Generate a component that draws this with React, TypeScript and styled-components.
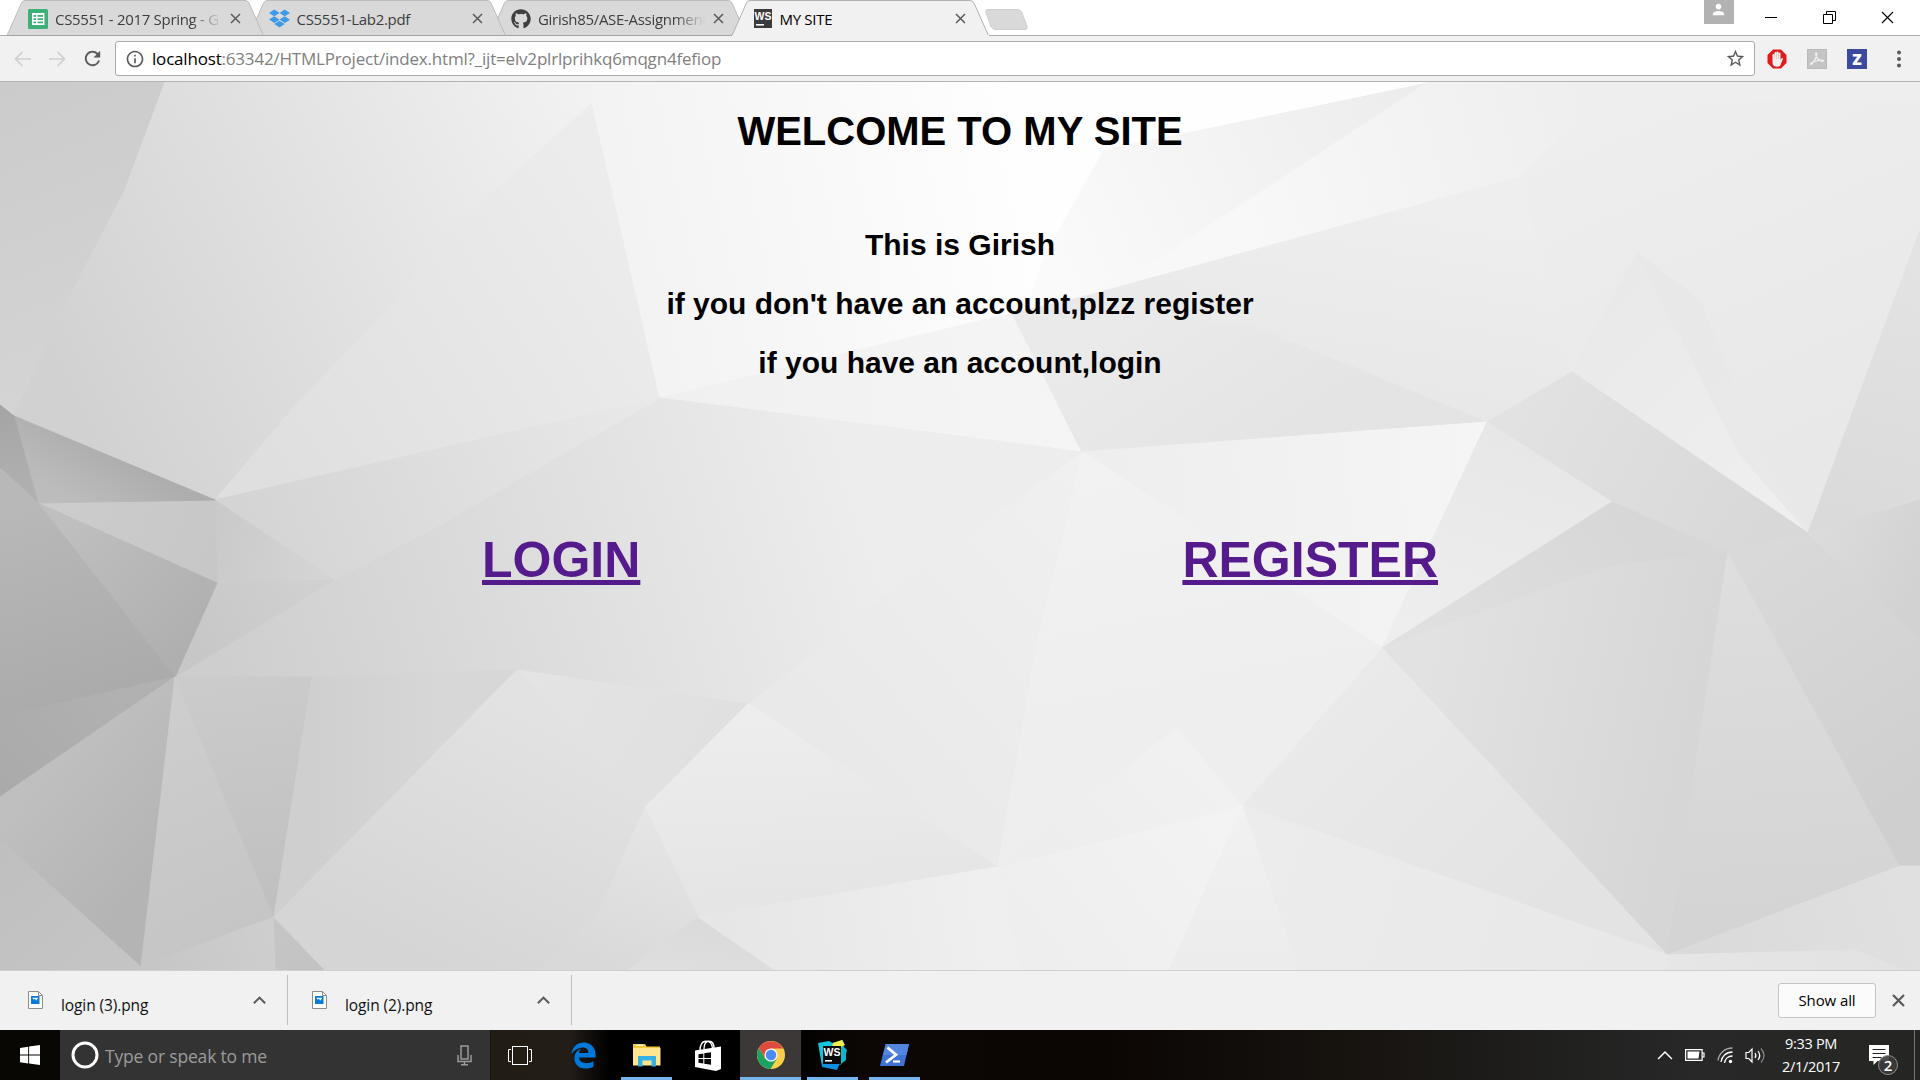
import React from "react";
import styled, { createGlobalStyle } from "styled-components";
import { FaDropbox, FaGithub, FaEdgeLegacy } from "react-icons/fa";
import { MdRefresh, MdInfoOutline, MdStarBorder, MdPerson } from "react-icons/md";

const GlobalStyle = createGlobalStyle`
  html, body { margin: 0; padding: 0; }
  body { width: 1920px; height: 1080px; overflow: hidden; }
  * { box-sizing: border-box; }
  svg { display: block; flex: none; }
`;

const uiFont = `"Open Sans", "Noto Sans", sans-serif`;

const Screen = styled.div`
  display: flex;
  flex-direction: column;
  width: 1920px;
  height: 1080px;
  background: #fff;
  font-family: ${uiFont};
`;

/* ---------- tab strip ---------- */

const TabStrip = styled.div`
  display: flex;
  height: 36px;
  padding: 0 3px 0 7px;
  background: #fff;
  box-shadow: inset 0 -1px 0 #b0b0b0;
`;

const TabBox = styled.div<{ $layer: number }>`
  position: relative;
  z-index: ${(p) => p.$layer};
  display: flex;
  align-items: center;
  width: 257px;
  height: 36px;
  margin-right: -15.5px;
  padding: 1px 22px 0 21px;
`;

const TabShape = styled.svg`
  position: absolute;
  left: 0;
  top: 0;
`;

const Favicon = styled.div`
  position: relative;
  display: flex;
  width: 20px;
  justify-content: center;
  margin-right: 7px;
`;

const TabTitle = styled.div<{ $fade?: boolean; $active?: boolean }>`
  position: relative;
  width: 167px;
  overflow: hidden;
  white-space: nowrap;
  font-size: 15px;
  line-height: 22px;
  letter-spacing: -0.3px;
  color: ${(p) => (p.$active ? "#000" : "#3e3e3e")};
  ${(p) => p.$fade && "mask-image: linear-gradient(90deg, #000 136px, transparent 167px);"}
`;

const TabClose = styled.div`
  position: relative;
  margin-left: 8px;
`;

const NewTab = styled.div`
  width: 37px;
  height: 21px;
  margin: 9px 0 0 15px;
  border: 1px solid #cfcfcf;
  border-radius: 4px;
  background: #d9d9d9;
  transform: skewX(20deg);
`;

const WindowControls = styled.div`
  display: flex;
  margin-left: auto;
`;

const ProfileButton = styled.div`
  display: flex;
  justify-content: center;
  width: 30px;
  height: 24px;
  padding-top: 1px;
  margin-right: 8px;
  background: #b2b2b2;
  color: #fff;
`;

const WindowButton = styled.div`
  display: flex;
  align-items: center;
  justify-content: center;
  width: 58.5px;
  height: 34px;
`;

/* ---------- toolbar ---------- */

const Toolbar = styled.div`
  display: flex;
  align-items: center;
  height: 46px;
  padding: 0 5px;
  background: #f1f1f1;
  border-bottom: 1px solid #b3b5b3;
`;

const NavButton = styled.div<{ $off?: boolean }>`
  display: flex;
  justify-content: center;
  width: 35px;
  color: ${(p) => (p.$off ? "#cfcfcf" : "#5a5a5a")};
`;

const Omnibox = styled.div`
  display: flex;
  flex: none;
  align-items: center;
  width: 1640px;
  height: 35px;
  margin-left: 5px;
  padding: 0 8px 0 9px;
  border: 1px solid #a9a9a9;
  border-radius: 3px;
  background: #fff;
  color: #5a5a5a;
`;

const Address = styled.div`
  flex: 1;
  padding-left: 7px;
  font-size: 17px;
  line-height: 26px;
  letter-spacing: -0.19px;
  white-space: nowrap;
  color: #808080;
  b { font-weight: 400; color: #000; }
`;

const Extensions = styled.div`
  display: flex;
  align-items: center;
  gap: 20px;
  margin-left: 12px;
`;

/* ---------- page ---------- */

const Page = styled.main`
  position: relative;
  flex: 1;
  min-height: 0;
  overflow: hidden;
  font-family: "Liberation Sans", Arial, sans-serif;
  font-weight: 700;
  color: #000;
`;

const Backdrop = styled.svg`
  position: absolute;
  inset: 0;
`;

const PageBody = styled.div`
  position: relative;
  display: flex;
  flex-direction: column;
  align-items: center;
`;

const Title = styled.h1`
  margin: 26px 0 74px;
  font-size: 40px;
  line-height: 46px;
`;

const Line = styled.p`
  margin: 0 0 25px;
  font-size: 30px;
  line-height: 34px;
`;

const Links = styled.nav`
  display: flex;
  justify-content: space-between;
  width: 956px;
  margin-top: 127px;
`;

const PageLink = styled.a`
  font-size: 50px;
  line-height: 57px;
  color: #551a8b;
  text-decoration: underline;
  text-decoration-thickness: 5px;
  text-underline-offset: 3px;
  text-decoration-skip-ink: none;
`;

/* ---------- downloads ---------- */

const Downloads = styled.div`
  display: flex;
  align-items: center;
  height: 60px;
  padding-bottom: 1px;
  border-top: 1px solid #d0d0d0;
  background: #f1f1f1;
`;

const DownloadItem = styled.div`
  display: flex;
  align-items: center;
  width: 284px;
  height: 50px;
  padding: 0 21px 0 24px;
  border-right: 1px solid #bfbfbf;
  &:first-child { width: 288px; padding-left: 28px; }
`;

const FileName = styled.div`
  flex: 1;
  padding: 9px 0 0 18px;
  font-size: 15.5px;
  letter-spacing: -0.1px;
  line-height: 22px;
  color: #111;
`;

const ShowAll = styled.button`
  width: 98px;
  height: 35px;
  margin: 0 16px 0 auto;
  border: 1px solid #c4c4c4;
  border-radius: 3px;
  background: #fbfbfb;
  font: 15px ${uiFont};
  letter-spacing: -0.1px;
  color: #000;
  padding: 0;
`;

const BarClose = styled.div`
  margin-right: 15px;
`;

/* ---------- taskbar ---------- */

const Taskbar = styled.div`
  display: flex;
  height: 50px;
  background: linear-gradient(90deg, #080704 0, #080704 490px, #221c14 491px, #221d17 570px, #000 610px, #000 780px, #0c0704 860px, #0b0603 1100px, #17130f 1350px, #20201f 1560px, #282828 1700px, #252523 1920px);
`;

const StartButton = styled.div`
  display: flex;
  align-items: center;
  justify-content: center;
  width: 60px;
`;

const SearchBox = styled.div`
  display: flex;
  align-items: center;
  width: 430px;
  padding: 0 18px 0 11px;
  background: #333;
`;

const SearchText = styled.div`
  flex: 1;
  padding: 1px 0 0 6px;
  font-size: 17.5px;
  letter-spacing: -0.18px;
  color: #9b9b9b;
`;

const TaskButton = styled.div<{ $width: number; $bar?: number; $active?: boolean }>`
  display: flex;
  align-items: center;
  justify-content: center;
  width: ${(p) => p.$width}px;
  background:
    ${(p) => (p.$bar ? `linear-gradient(#76b4ee, #76b4ee) center bottom / ${p.$bar}px 3px no-repeat` : "none")}
    ${(p) => (p.$active ? ", #3b3837" : "")};
`;

const Tray = styled.div`
  display: flex;
  align-items: center;
  margin-left: auto;
`;

const Clock = styled.div`
  width: 80px;
  margin: 0 18px 0 1px;
  text-align: center;
  color: #fff;
  font-size: 14.5px;
  line-height: 23px;
  letter-spacing: -0.3px;
`;

const Notice = styled.div`
  position: relative;
  width: 32px;
  height: 50px;
`;

const NoticeIcon = styled.svg`
  position: absolute;
  left: 0;
  top: 15px;
`;

const Badge = styled.div`
  position: absolute;
  left: 9px;
  top: 25px;
  width: 20px;
  height: 20px;
  border: 1px solid #8d8d8d;
  border-radius: 50%;
  background: #3a3a3ae8;
  color: #fff;
  font-size: 15px;
  font-weight: 600;
  line-height: 18px;
  text-align: center;
`;

const DesktopEdge = styled.div`
  width: 1px;
  height: 50px;
  margin: 0 5px 0 13px;
  background: #777;
`;

/* ---------- drawings ---------- */

const Cross = ({ size, width, color }: { size: number; width: number; color: string }) => (
  <svg width={size} height={size} viewBox={`0 0 ${size} ${size}`}>
    <path d={`M1 1L${size - 1} ${size - 1}M${size - 1} 1L1 ${size - 1}`} stroke={color} strokeWidth={width} />
  </svg>
);

const SheetIcon = () => (
  <svg width="20" height="20" viewBox="0 0 20 20">
    <rect width="20" height="20" rx="1.5" fill="#3bb077" />
    <path d="M4 4h12.500v12H4z" fill="#fff" />
    <path d="M5.500 6H8v1.800H5.500zM9.500 6H15v1.800H9.500zM5.500 9.200H8V11H5.500zM9.500 9.200H15V11H9.500zM5.500 12.400H8v1.800H5.500zM9.500 12.400H15v1.800H9.500z" fill="#3bb077" />
  </svg>
);

const WsIcon = () => (
  <svg width="18" height="19" viewBox="0 0 18 19">
    <rect width="18" height="19" fill="#3b3b3b" />
    <text x="9" y="10.500" textAnchor="middle" fontFamily="Liberation Sans, sans-serif" fontWeight="700" fontSize="10.500" fill="#fff">WS</text>
    <path d="M2 15h8v1.600H2z" fill="#fff" />
  </svg>
);

const Arrow = ({ flip }: { flip?: boolean }) => (
  <svg width="17" height="16" viewBox="0 0 17 16">
    <path
      d={flip ? "M0 8h15.500M8.500 1l7 7-7 7" : "M17 8H1.500M8.500 1l-7 7 7 7"}
      fill="none"
      stroke="currentColor"
      strokeWidth="1.700"
    />
  </svg>
);

const BlockIcon = () => (
  <svg width="20" height="20" viewBox="0 0 20 20">
    <path d="M6 .5h8L19.500 6v8L14 19.500H6L.5 14V6z" fill="#e01b1b" />
    <path
      d="M5.500 10.500V6a1 1 0 0 1 2 0V4a1 1 0 0 1 2 0v-.6a1 1 0 0 1 2 0V4.400a1 1 0 0 1 2 0V11l1-1.600c.8-.9 1.800-.3 1.400.6l-2.500 6.200c-.6 1.200-1.400 1.500-3.100 1.500-3.200 0-4.800-1.200-4.800-4.200z"
      fill="#f4efef"
    />
    <path d="M7.500 5v5M9.500 4v6M11.500 4.500V10" stroke="#d9b4b4" strokeWidth=".6" />
  </svg>
);

const PdfIcon = () => (
  <svg width="20" height="20" viewBox="0 0 20 20">
    <rect x=".5" y=".5" width="19" height="19" fill="#c4c4c4" stroke="#b9b9b9" />
    <path
      d="M4 15.500c1.500-.4 5-5.500 5.800-10.500.1-1.400-1.500-1.300-1.200.2.500 3 3.200 6.200 6.500 7.100 1.700.3 1.800-1.200.2-1.300-3.500-.1-7.500.9-10.600 2.800-1.300.9-1.500 1.700-.7 1.700z"
      fill="none"
      stroke="#f3f3f3"
      strokeWidth="1.200"
    />
  </svg>
);

const ZIcon = () => (
  <svg width="20" height="20" viewBox="0 0 20 20">
    <rect width="20" height="20" fill="#3b4a9c" />
    <text x="10" y="15.500" textAnchor="middle" fontFamily="Open Sans, sans-serif" fontWeight="800" fontSize="15.500" fill="#fff">Z</text>
  </svg>
);

const MenuDots = () => (
  <svg width="24" height="18" viewBox="-10 0 24 18">
    <circle cx="2" cy="2.500" r="2" fill="#5a5a5a" />
    <circle cx="2" cy="9" r="2" fill="#5a5a5a" />
    <circle cx="2" cy="15.500" r="2" fill="#5a5a5a" />
  </svg>
);

const FileIcon = () => (
  <svg width="15" height="18" viewBox="0 0 15 18">
    <path d="M.5.5h10l4 4v13H.5z" fill="#fff" stroke="#8c8c8c" />
    <path d="M10.500.5v4h4" fill="none" stroke="#8c8c8c" />
    <path d="M3 5h8.500v8H3z" fill="#0a78d7" />
    <path d="M4.300 6.800l1.500 2 1-1.200 1.400 2.200 2-3z" fill="#fff" />
  </svg>
);

const Chevron = ({ size, width, color }: { size: number; width: number; color: string }) => (
  <svg width={size} height={size * 0.62} viewBox="0 0 16 10">
    <path d="M1 9l7-7 7 7" fill="none" stroke={color} strokeWidth={width} />
  </svg>
);

const WindowsLogo = () => (
  <svg width="20" height="20" viewBox="0 0 20 20" fill="#fff">
    <path d="M0 2.900L8.200 1.700V9.600H0zM9.100 1.600L20 0V9.600H9.100zM0 10.500h8.200v7.900L0 17.200zM9.100 10.500H20V20L9.100 18.500z" />
  </svg>
);

const MicIcon = () => (
  <svg width="15" height="21" viewBox="0 0 15 21" fill="none" stroke="#9b9b9b" strokeWidth="1.500">
    <rect x="4" y="1" width="7" height="13" />
    <path d="M1 10v6.500h13V10M7.500 16.500V19M4 19.700h7" />
  </svg>
);

const TaskViewIcon = () => (
  <svg width="24" height="19" viewBox="0 0 24 19" fill="none" stroke="#fff">
    <rect x="4.500" y=".5" width="15" height="18" />
    <path d="M3 3.500H.5v12H3M21 3.500h2.500v12H21" />
  </svg>
);

const FolderIcon = () => (
  <svg width="28" height="24" viewBox="0 0 28 24">
    <path d="M0 1h12l1.500 2.500H27V22H0z" fill="#f4c63d" />
    <path d="M3 1.500h7V3H3z" fill="#fff6d5" />
    <path d="M0 5h27.500v17.500H0z" fill="#fde592" />
    <path d="M5 23.500V13h18v10.500h-4.500V17.500h-9v6z" fill="#37b1e4" />
  </svg>
);

const StoreIcon = () => (
  <svg width="26" height="31" viewBox="0 0 26 31">
    <path d="M5 11C5 5 6.500 1.500 10.500 1.200S17 4 17.500 8M9 9C9 4 11 1 14 1.200S19 4 19 8" fill="none" stroke="#fff" strokeWidth="1.400" />
    <path d="M0 10.500L26 6.500V29L21 31 0 27z" fill="#fff" />
    <path d="M3.500 14.200L8.300 13.500V18H3.500zM9.300 13.300L16 12.300V18H9.300zM3.500 19H8.300V23.500L3.500 22.800zM9.300 19H16V24.700L9.300 23.700z" fill="#000" />
  </svg>
);

const ChromeIcon = () => (
  <svg width="28" height="28" viewBox="0 0 28 28">
    <circle cx="14" cy="14" r="14" fill="#fcd049" />
    <path d="M14 14L8 17.500 1.900 7A14 14 0 0 1 26.200 7.500H14z" fill="#dd4b3e" />
    <path d="M1.900 7L8 17.500 14 20.500 19.800 17.800 13.500 28A14 14 0 0 1 1.900 7z" fill="#1da261" />
    <circle cx="14" cy="14" r="6.600" fill="#f1f1f1" />
    <circle cx="14" cy="14" r="5.200" fill="#4a8af4" />
  </svg>
);

const WebStormIcon = () => (
  <svg width="30" height="30" viewBox="0 0 30 30">
    <path d="M0 3l11-2 8 5-6 22-9-2z" fill="#15c5dc" />
    <path d="M4 23h18l-3 7-15-3z" fill="#0f8fdd" />
    <path d="M14 3l11-3 1 7 3 3-1 4 0 6-6 5-9-12z" fill="#10b5c9" />
    <path d="M15 3l9-3 3 5-4 2h-9z" fill="#f3ef48" />
    <rect x="5" y="6" width="18" height="18" fill="#0b0b0b" />
    <text x="14" y="16" textAnchor="middle" fontFamily="Liberation Sans, sans-serif" fontWeight="700" fontSize="10.500" fill="#fff">WS</text>
    <path d="M7 20h7v1.600H7z" fill="#fff" />
  </svg>
);

const PowerShellIcon = () => (
  <svg width="29" height="22" viewBox="0 0 29 22">
    <path d="M5.500 0H29l-5 22H0z" fill="#3f73d1" />
    <path d="M6 0H29l-2.500 11H3z" fill="#5286de" />
    <path d="M7.500 3.500l8.500 7.300L6 18.500" fill="none" stroke="#fff" strokeWidth="2.800" />
    <path d="M13 17.500h7" stroke="#fff" strokeWidth="2.200" />
  </svg>
);

const BatteryIcon = () => (
  <svg width="20" height="12" viewBox="0 0 20 12">
    <path d="M.6.6h16.500v10.800H.6zM17.500 4H19v4h-1.500" fill="none" stroke="#fff" strokeWidth="1.200" />
    <path d="M2.500 2.500h12l-1 7h-11z" fill="#fff" />
  </svg>
);

const WifiIcon = () => (
  <svg width="17" height="17" viewBox="0 0 17 17" fill="none" strokeWidth="1.300">
    <path d="M1 13.500C2 6 8 1 15.500 1" stroke="#aaa" />
    <path d="M4 15C4.500 9.500 9 5 15.500 5" stroke="#fff" />
    <path d="M7.500 16C8 12 11 9 15.500 9" stroke="#fff" />
    <circle cx="13.500" cy="14.500" r="1.700" fill="#fff" />
  </svg>
);

const VolumeIcon = () => (
  <svg width="21" height="17" viewBox="0 0 21 17" fill="none" stroke="#fff" strokeWidth="1.200">
    <path d="M1 5.500h2.800L7 2v13l-3.200-3.500H1z" />
    <path d="M10 6q1.800 2.500 0 5M13 4q3.500 4.500 0 9" />
    <path d="M16 1.500q6 7 0 14" stroke="#888" />
  </svg>
);

/* ---------- faceted backdrop ---------- */

type FacetSpec = { pts: string; line: [number, number, number, number]; from: string; to: string };

const f = (pts: string, line: [number, number, number, number], from: string, to: string): FacetSpec => ({ pts, line, from, to });

const facets: FacetSpec[] = [
  f("0,82 165,82 125,190 60,315 14,416 0,405", [0, 82, 130, 400], "#cbcbcb", "#d5d5d5"),
  f("165,82 592,82 592,103 660,398 215,500 14,416 62,312 125,190", [60, 380, 592, 110], "#d1d1d1", "#f2f2f2"),
  f("592,103 660,398 215,500 300,400 386,312 440,240", [260, 450, 620, 220], "#dfdfdf", "#ececec"),
  f("592,82 1428,82 1104,150 1082,297 1012,313 660,398 592,103", [600, 250, 1020, 160], "#f2f2f2", "#fefefe"),
  f("660,398 1012,313 1082,452", [660, 398, 1082, 380], "#f0f0f0", "#f5f5f5"),
  f("1428,84 1104,150 1045,255 1030,300 1082,297 1168,253", [1060, 270, 1420, 90], "#fafafa", "#ececec"),
  f("1428,82 1920,82 1920,240 1637,253 1520,177 1082,297 1168,253", [1240, 220, 1600, 120], "#f8f8f8", "#eeeeee"),
  f("1082,297 1520,177 1572,372 1487,422 1082,452 1012,313", [1300, 190, 1260, 440], "#eeeeee", "#e6e6e6"),
  f("1012,313 1250,325 1487,422 1082,452", [1180, 290, 1280, 440], "#eaeaea", "#e4e4e4"),
  f("1520,177 1600,100 1920,100 1920,230 1808,533 1572,372", [1600, 110, 1760, 480], "#eeeeee", "#e8e8e8"),
  f("1572,372 1637,253 1808,533", [1590, 300, 1790, 510], "#e9e9e9", "#efefef"),
  f("1637,253 1700,300 1760,450 1808,533 1740,455", [1640, 260, 1800, 510], "#e8e8e8", "#e9e9e9"),
  f("1920,230 1920,505 1808,533", [1910, 260, 1840, 520], "#e3e3e3", "#dadada"),
  f("1572,372 1808,533 1728,552 1612,502 1487,422", [1520, 400, 1760, 540], "#e2e2e2", "#d8d8d8"),
  f("1082,452 1487,422 1382,648", [1100, 460, 1480, 430], "#eeeeee", "#f5f5f5"),
  f("1487,422 1612,502 1382,648", [1490, 430, 1420, 640], "#e7e7e7", "#eeeeee"),
  f("1612,502 1728,552 1600,580 1382,648", [1620, 510, 1420, 640], "#d7d7d7", "#e0e0e0"),
  f("1728,552 1667,955 1382,648 1610,566", [1430, 640, 1700, 700], "#e2e2e2", "#d6d6d6"),
  f("1728,552 1900,866 1667,955", [1720, 570, 1740, 920], "#dedede", "#d4d4d4"),
  f("1728,552 1808,533 1920,633 1920,866 1900,866", [1750, 560, 1910, 800], "#d9d9d9", "#cfcfcf"),
  f("1808,533 1920,500 1920,640", [1810, 533, 1920, 580], "#dcdcdc", "#d2d2d2"),
  f("1900,866 1920,866 1920,970 1905,970 1854,950 1667,955", [1700, 950, 1900, 880], "#dadada", "#e0e0e0"),
  f("1667,955 1854,950 1905,970 1660,970", [1667, 955, 1900, 970], "#e6e6e6", "#e2e2e2"),
  f("1382,648 1667,955 1242,805", [1340, 680, 1560, 900], "#eaeaea", "#e3e3e3"),
  f("1242,805 1667,955 1667,970 1296,970", [1250, 840, 1640, 960], "#ececec", "#e8e8e8"),
  f("1242,805 1298,970 1168,970", [1242, 810, 1240, 970], "#f1f1f1", "#ececec"),
  f("1242,805 1168,970 1000,970 997,867", [1220, 820, 1040, 960], "#f3f3f3", "#eeeeee"),
  f("1177,727 1242,805 997,867", [1177, 740, 1060, 860], "#f1f1f1", "#ededed"),
  f("1082,452 1382,648 1242,805 1177,727 997,867 1035,650", [1090, 460, 1140, 720], "#f2f2f2", "#eeeeee"),
  f("660,398 1082,452 1035,650 997,867 748,704 880,580", [780, 680, 1060, 440], "#e9e9e9", "#f0f0f0"),
  f("660,398 1082,452 905,580 748,704 517,670 274,917 312,677 175,677 334,580 440,525", [230, 700, 860, 500], "#cecece", "#ededed"),
  f("215,500 660,398 560,455 440,525 334,580", [260, 560, 650, 400], "#d4d4d4", "#e9e9e9"),
  f("215,500 334,580 217,583", [217, 540, 320, 560], "#cacaca", "#d4d4d4"),
  f("217,583 334,580 175,677", [190, 640, 310, 580], "#c7c7c7", "#d0d0d0"),
  f("38,503 215,500 217,583", [60, 505, 215, 570], "#cccccc", "#c7c7c7"),
  f("38,503 217,583 175,677", [70, 520, 190, 650], "#bfbfbf", "#afafaf"),
  f("14,416 215,500 38,503", [110, 450, 80, 503], "#adadad", "#bcbcbc"),
  f("0,405 14,416 38,503 0,468", [10, 410, 15, 490], "#a5a5a5", "#b0b0b0"),
  f("0,468 38,503 175,677 0,717", [50, 500, 110, 690], "#b8b8b8", "#ababab"),
  f("0,717 175,677 0,797", [120, 690, 0, 790], "#b1b1b1", "#aaaaaa"),
  f("0,797 175,677 141,967 0,840", [40, 780, 150, 880], "#bfbfbf", "#b4b4b4"),
  f("0,840 141,967 141,970 0,970", [0, 850, 90, 960], "#bfbfbf", "#c4c4c4"),
  f("175,677 274,917 185,950 141,967", [170, 720, 260, 930], "#cdcdcd", "#c5c5c5"),
  f("175,677 312,677 274,917", [240, 680, 265, 900], "#cbcbcb", "#c0c0c0"),
  f("312,677 517,670 274,917", [310, 700, 440, 700], "#cfcfcf", "#d7d7d7"),
  f("141,967 185,950 274,917 276,970 141,970", [150, 970, 270, 930], "#c6c6c6", "#cecece"),
  f("274,917 325,970 276,970", [274, 917, 300, 970], "#c6c6c6", "#c3c3c3"),
  f("517,670 645,807 600,920 560,970 325,970 274,917", [540, 720, 420, 960], "#e2e2e2", "#d5d5d5"),
  f("517,670 748,704 645,807", [520, 675, 700, 780], "#e4e4e4", "#e0e0e0"),
  f("748,704 997,867 698,917 645,807", [750, 720, 760, 900], "#ededed", "#e5e5e5"),
  f("645,807 698,917 628,970 540,970 600,910", [645, 820, 590, 960], "#e5e5e5", "#d9d9d9"),
  f("698,917 775,970 628,970", [698, 920, 690, 970], "#dadada", "#dedede"),
  f("698,917 997,867 1020,970 775,970", [720, 930, 980, 880], "#e6e6e6", "#efefef"),
];

const Facets = () => (
  <Backdrop width="1920" height="888" viewBox="0 82 1920 888">
    <defs>
      {facets.map((facet, i) => (
        <linearGradient
          key={i}
          id={`facet${i}`}
          gradientUnits="userSpaceOnUse"
          x1={facet.line[0]}
          y1={facet.line[1]}
          x2={facet.line[2]}
          y2={facet.line[3]}
        >
          <stop offset="0" stopColor={facet.from} />
          <stop offset="1" stopColor={facet.to} />
        </linearGradient>
      ))}
    </defs>
    <rect y="82" width="1920" height="888" fill="#ebebeb" />
    {facets.map((facet, i) => (
      <polygon key={i} points={facet.pts} fill={`url(#facet${i})`} stroke={`url(#facet${i})`} strokeWidth="1" />
    ))}
  </Backdrop>
);

/* ---------- assembly ---------- */

type TabProps = {
  icon: React.ReactNode;
  title: string;
  layer: number;
  fade?: boolean;
  active?: boolean;
};

const Tab = ({ icon, title, layer, fade, active }: TabProps) => (
  <TabBox $layer={layer}>
    <TabShape width="257" height="36" viewBox="0 0 257 36">
      <path
        d="M0 35.500L14.500 3Q16 .5 18 .5H238Q240.500 .5 242 3L256.500 35.500"
        fill={active ? "#f1f1f1" : "#d9d9d9"}
        stroke={active ? "#b0b0b0" : "#bcbcbc"}
      />
      <path d="M0 35.500H257" stroke={active ? "#f1f1f1" : "#a6a6a6"} />
    </TabShape>
    <Favicon>{icon}</Favicon>
    <TabTitle $fade={fade} $active={active}>{title}</TabTitle>
    <TabClose><Cross size={11} width={1.5} color="#5a5a5a" /></TabClose>
  </TabBox>
);

export default function App() {
  return (
    <Screen>
      <GlobalStyle />
      <TabStrip>
        <Tab layer={3} icon={<SheetIcon />} title="CS5551 - 2017 Spring - G" fade />
        <Tab layer={2} icon={<FaDropbox size={21} color="#3d9ae8" />} title="CS5551-Lab2.pdf" />
        <Tab layer={1} icon={<FaGithub size={20} color="#3f3f3f" />} title="Girish85/ASE-Assignment" fade />
        <Tab layer={4} icon={<WsIcon />} title="MY SITE" active />
        <NewTab />
        <WindowControls>
          <ProfileButton><MdPerson size={17} /></ProfileButton>
          <WindowButton>
            <svg width="12" height="1"><path d="M0 .5h12" stroke="#000" /></svg>
          </WindowButton>
          <WindowButton>
            <svg width="13" height="13" viewBox="0 0 13 13" fill="none" stroke="#000">
              <path d="M.5 3.500h9v9h-9zM3.500 3.500v-3h9v9h-3" />
            </svg>
          </WindowButton>
          <WindowButton><Cross size={13} width={1.1} color="#000" /></WindowButton>
        </WindowControls>
      </TabStrip>

      <Toolbar>
        <NavButton $off><Arrow /></NavButton>
        <NavButton $off><Arrow flip /></NavButton>
        <NavButton><MdRefresh size={23} /></NavButton>
        <Omnibox>
          <MdInfoOutline size={20} />
          <Address><b>localhost</b>:63342/HTMLProject/index.html?_ijt=elv2plrlprihkq6mqgn4fefiop</Address>
          <MdStarBorder size={21} />
        </Omnibox>
        <Extensions>
          <BlockIcon />
          <PdfIcon />
          <ZIcon />
          <MenuDots />
        </Extensions>
      </Toolbar>

      <Page>
        <Facets />
        <PageBody>
          <Title>WELCOME TO MY SITE</Title>
          <Line>This is Girish</Line>
          <Line>if you don't have an account,plzz register</Line>
          <Line>if you have an account,login</Line>
          <Links>
            <PageLink>LOGIN</PageLink>
            <PageLink>REGISTER</PageLink>
          </Links>
        </PageBody>
      </Page>

      <Downloads>
        {["login (3).png", "login (2).png"].map((name) => (
          <DownloadItem key={name}>
            <FileIcon />
            <FileName>{name}</FileName>
            <Chevron size={13} width={2.6} color="#5a5a5a" />
          </DownloadItem>
        ))}
        <ShowAll>Show all</ShowAll>
        <BarClose><Cross size={13} width={2.2} color="#5a5a5a" /></BarClose>
      </Downloads>

      <Taskbar>
        <StartButton><WindowsLogo /></StartButton>
        <SearchBox>
          <svg width="28" height="28" viewBox="0 0 28 28">
            <circle cx="14" cy="14" r="12" fill="none" stroke="#fff" strokeWidth="3" />
          </svg>
          <SearchText>Type or speak to me</SearchText>
          <MicIcon />
        </SearchBox>
        <TaskButton $width={60}><TaskViewIcon /></TaskButton>
        <TaskButton $width={67}><FaEdgeLegacy size={27} color="#0078d7" /></TaskButton>
        <TaskButton $width={59} $bar={51}><FolderIcon /></TaskButton>
        <TaskButton $width={64}><StoreIcon /></TaskButton>
        <TaskButton $width={61} $bar={61} $active><ChromeIcon /></TaskButton>
        <TaskButton $width={63} $bar={51}><WebStormIcon /></TaskButton>
        <TaskButton $width={61} $bar={51}><PowerShellIcon /></TaskButton>
        <Tray>
          <TaskButton $width={31}><Chevron size={16} width={1.5} color="#fff" /></TaskButton>
          <TaskButton $width={30}><BatteryIcon /></TaskButton>
          <TaskButton $width={30}><WifiIcon /></TaskButton>
          <TaskButton $width={30}><VolumeIcon /></TaskButton>
          <Clock>
            <div>9:33 PM</div>
            <div>2/1/2017</div>
          </Clock>
          <Notice>
            <NoticeIcon width="20" height="21" viewBox="0 0 20 21">
              <path d="M0 0h20v16H8.500L4.500 20v-4H0z" fill="#fff" />
              <path d="M3.500 4.500h13M3.500 8.500h13M3.500 12.500h9" stroke="#222" />
            </NoticeIcon>
            <Badge>2</Badge>
          </Notice>
          <DesktopEdge />
        </Tray>
      </Taskbar>
    </Screen>
  );
}
